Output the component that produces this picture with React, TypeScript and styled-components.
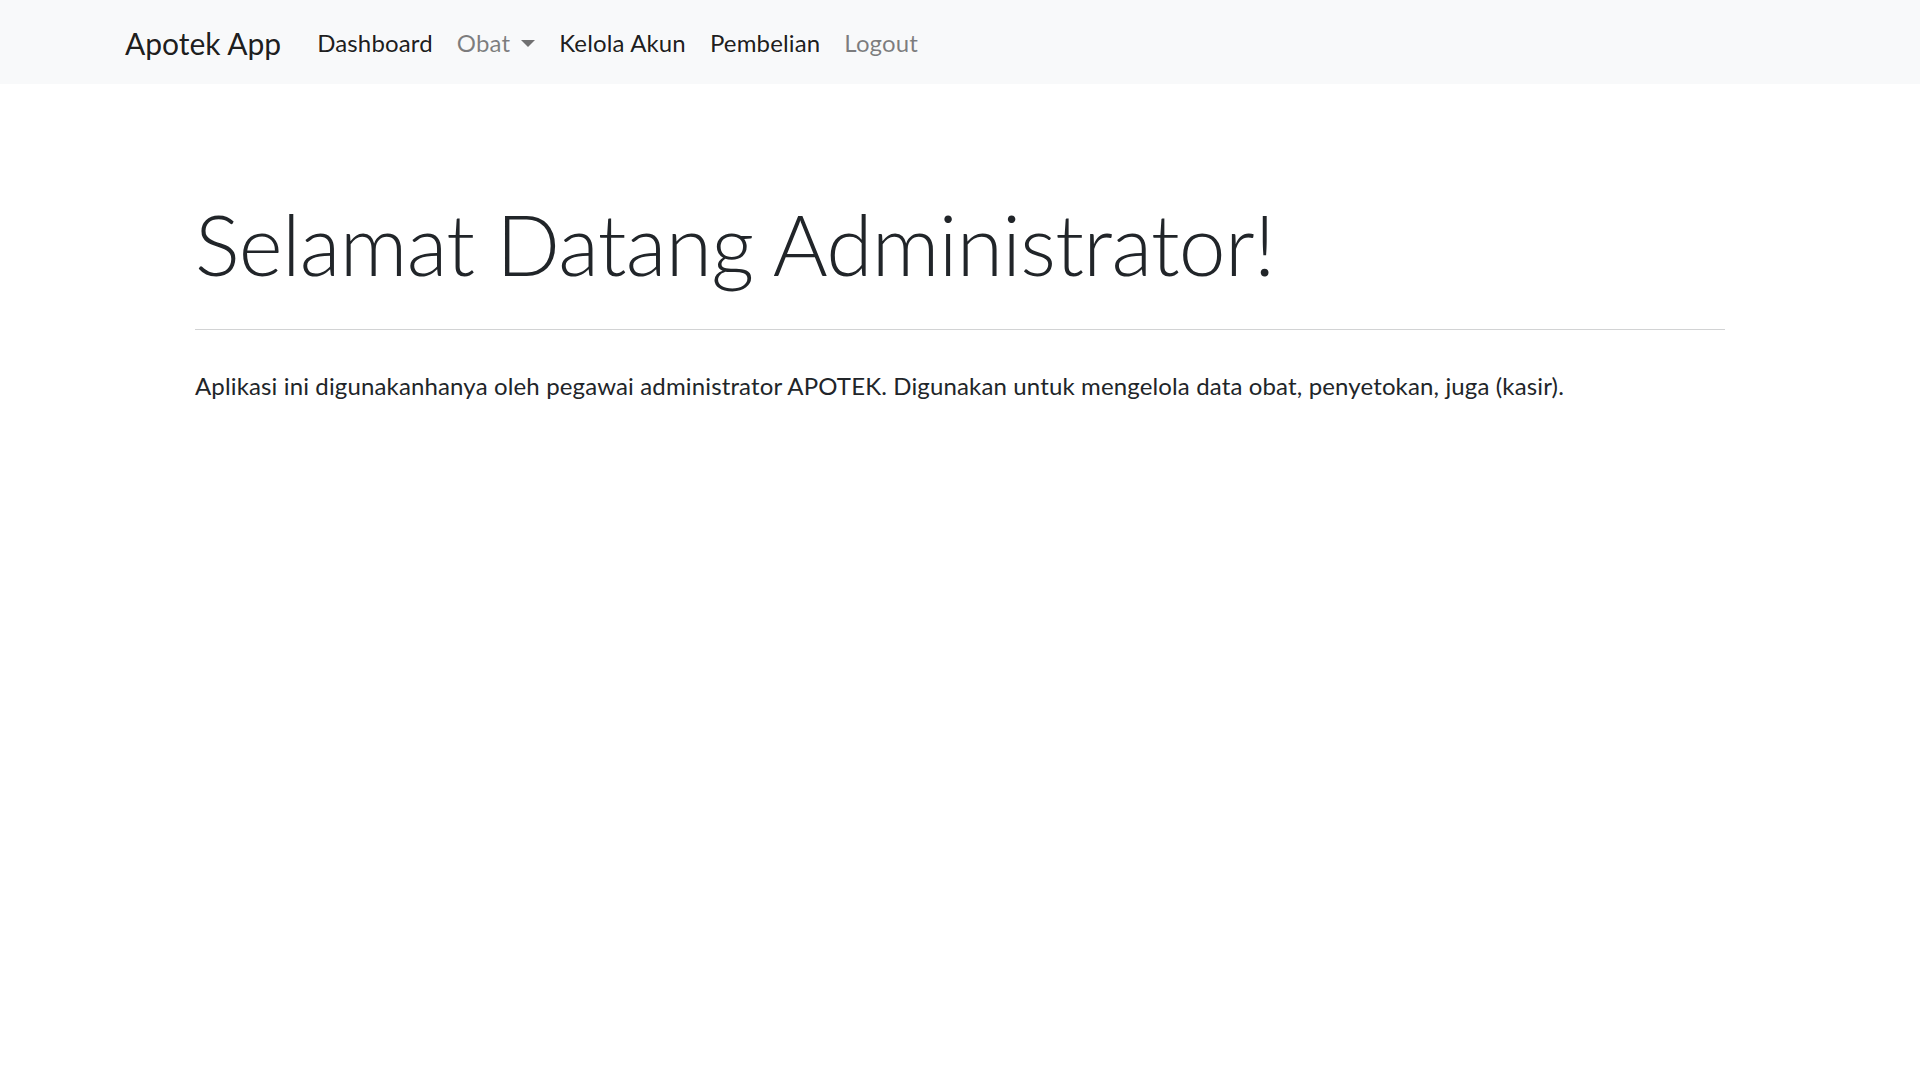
import React from "react";
import styled, { createGlobalStyle } from "styled-components";

const Global = createGlobalStyle`
  html, body { margin: 0; padding: 0; background: #ffffff; }
  body {
    font-family: Lato, "Open Sans", "Liberation Sans", sans-serif;
    color: #212529;
    font-size: 24px;
  }
  * { box-sizing: border-box; }
`;

const Navbar = styled.nav`
  height: 84px;
  background: #f8f9fa;
  display: flex;
  align-items: center;
  padding-top: 2px;
`;

const NavContainer = styled.div`
  width: 1710px;
  margin: 0 auto;
  padding: 0 20px;
  display: flex;
  align-items: center;
`;

const Brand = styled.a`
  font-size: 30px;
  line-height: 45px;
  color: rgba(0, 0, 0, 0.9);
  text-decoration: none;
  margin-right: 24px;
`;

const NavList = styled.ul`
  list-style: none;
  margin: 0;
  padding: 0;
  display: flex;
  align-items: center;
`;

const NavLink = styled.a<{ $muted?: boolean }>`
  display: flex;
  align-items: center;
  padding: 0 12px;
  font-size: 24px;
  line-height: 36px;
  letter-spacing: 0.15px;
  text-decoration: none;
  color: ${(p) => (p.$muted ? "rgba(0,0,0,0.5)" : "rgba(0,0,0,0.9)")};
`;

const Caret = styled.span`
  display: inline-block;
  margin-left: 11px;
  margin-top: 1px;
  width: 0;
  height: 0;
  border-top: 7.5px solid rgba(0, 0, 0, 0.55);
  border-left: 7.5px solid transparent;
  border-right: 7.5px solid transparent;
`;

const Main = styled.main`
  width: 1530px;
  margin: 110px auto 0;
`;

const Heading = styled.h1`
  margin: 0;
  font-size: 84px;
  font-weight: 300;
  line-height: 1.2;
  letter-spacing: -0.7px;
  color: #212529;
`;

const Divider = styled.hr`
  margin: 34px 0 0;
  border: 0;
  border-top: 1.5px solid #d2d3d4;
`;

const Lead = styled.p`
  margin: 38px 0 0;
  font-size: 24px;
  line-height: 36px;
  letter-spacing: 0.14px;
  color: #212529;
`;

export default function App() {
  return (
    <>
      <Global />
      <Navbar>
        <NavContainer>
          <Brand href="#">Apotek App</Brand>
          <NavList>
            <li><NavLink href="#">Dashboard</NavLink></li>
            <li>
              <NavLink href="#" $muted>
                Obat<Caret />
              </NavLink>
            </li>
            <li><NavLink href="#">Kelola Akun</NavLink></li>
            <li><NavLink href="#">Pembelian</NavLink></li>
            <li><NavLink href="#" $muted>Logout</NavLink></li>
          </NavList>
        </NavContainer>
      </Navbar>
      <Main>
        <Heading>Selamat Datang Administrator!</Heading>
        <Divider />
        <Lead>
          Aplikasi ini digunakanhanya oleh pegawai administrator APOTEK. Digunakan untuk mengelola data obat, penyetokan, juga (kasir).
        </Lead>
      </Main>
    </>
  );
}
